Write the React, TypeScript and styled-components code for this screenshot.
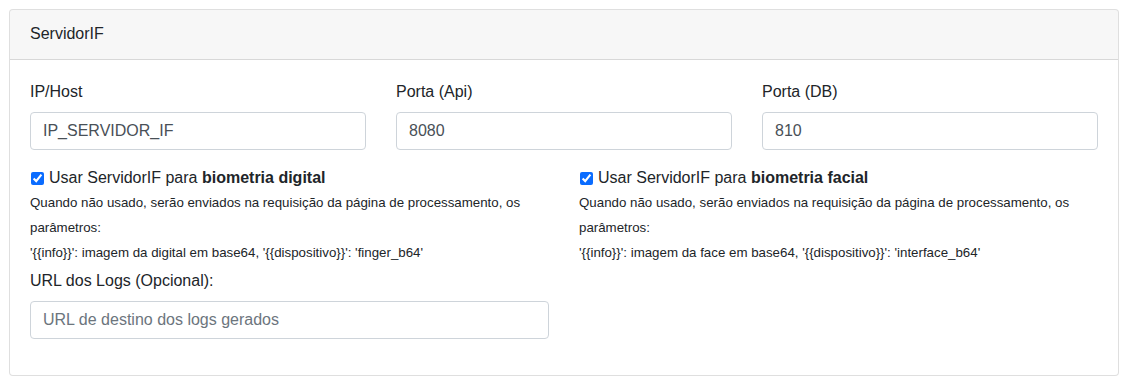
import React from "react";
import styled, { createGlobalStyle } from "styled-components";

const Global = createGlobalStyle`
  html, body { margin: 0; padding: 0; background: #fff; }
  body {
    font-family: "Liberation Sans", Arial, sans-serif;
    font-size: 16px;
    line-height: 1.5;
    color: #212529;
  }
  * { box-sizing: border-box; }
`;

const Page = styled.div`
  padding: 9px 10px 9px 9px;
`;

const Card = styled.div`
  border: 1px solid rgba(0, 0, 0, 0.125);
  border-radius: 4px;
  background: #fff;
`;

const CardHeader = styled.div`
  background: rgba(0, 0, 0, 0.03);
  border-bottom: 1px solid rgba(0, 0, 0, 0.125);
  padding: 12px 20px;
  height: 50px;
  border-radius: 3px 3px 0 0;
`;

const CardBody = styled.div`
  padding: 20px;
`;

const Row = styled.div<{ $cols: number }>`
  display: grid;
  grid-template-columns: repeat(${(p) => p.$cols}, 1fr);
  margin: 0 -15px;
`;

const Col = styled.div`
  padding: 0 15px;
  min-width: 0;
`;

const Group = styled.div<{ $mb?: number }>`
  margin-bottom: ${(p) => (p.$mb ?? 16)}px;
`;

const Label = styled.label`
  display: block;
  margin-bottom: 8px;
`;

const Input = styled.input`
  display: block;
  width: 100%;
  height: 38px;
  padding: 6px 12px;
  font-family: inherit;
  font-size: 16px;
  line-height: 1.5;
  color: #495057;
  background: #fff;
  border: 1px solid #ced4da;
  border-radius: 4px;
  outline: none;
  &::placeholder { color: #6c757d; opacity: 1; }
`;

const Check = styled.div`
  display: flex;
  align-items: center;
`;

const CheckBox = styled.input`
  width: 13px;
  height: 13px;
  margin: 0 5px 0 1px;
  accent-color: #0a6cff;
`;

const Help = styled.div`
  font-size: 16px;
  line-height: 24px;
  small { font-size: 13.3px; }
`;

const Narrow = styled.div`
  width: 50%;
  padding-right: 15px;
`;

function CheckGroup({ kind, info, disp }: { kind: string; info: string; disp: string }) {
  return (
    <Group $mb={4}>
      <Check>
        <CheckBox type="checkbox" defaultChecked />
        <span>
          Usar ServidorIF para <b>{kind}</b>
        </span>
      </Check>
      <Help>
        <small>
          Quando não usado, serão enviados na requisição da página de processamento, os parâmetros:
        </small>
        <br />
        <small>
          '{"{{info}}"}': {info}, '{"{{dispositivo}}"}': '{disp}'
        </small>
      </Help>
    </Group>
  );
}

export default function App() {
  return (
    <>
      <Global />
      <Page>
        <Card>
          <CardHeader>ServidorIF</CardHeader>
          <CardBody>
            <Row $cols={3}>
              <Col>
                <Group>
                  <Label>IP/Host</Label>
                  <Input defaultValue="IP_SERVIDOR_IF" />
                </Group>
              </Col>
              <Col>
                <Group>
                  <Label>Porta (Api)</Label>
                  <Input defaultValue="8080" />
                </Group>
              </Col>
              <Col>
                <Group>
                  <Label>Porta (DB)</Label>
                  <Input defaultValue="810" />
                </Group>
              </Col>
            </Row>
            <Row $cols={2}>
              <Col>
                <CheckGroup kind="biometria digital" info="imagem da digital em base64" disp="finger_b64" />
              </Col>
              <Col>
                <CheckGroup kind="biometria facial" info="imagem da face em base64" disp="interface_b64" />
              </Col>
            </Row>
            <Narrow>
              <Group>
                <Label>URL dos Logs (Opcional):</Label>
                <Input placeholder="URL de destino dos logs gerados" />
              </Group>
            </Narrow>
          </CardBody>
        </Card>
      </Page>
    </>
  );
}
